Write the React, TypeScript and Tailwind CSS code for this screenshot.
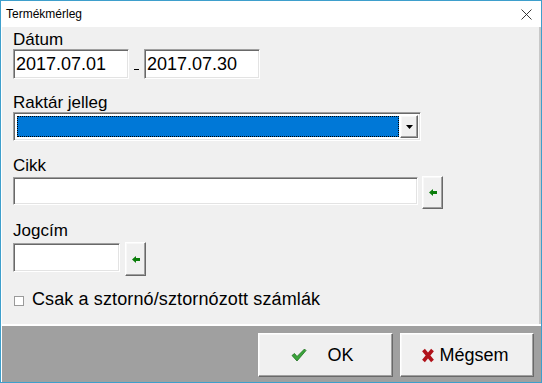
const sunken =
  "bg-white border border-t-[#a0a0a0] border-l-[#a0a0a0] border-b-white border-r-white shadow-[inset_1px_1px_0_#696969,inset_-1px_-1px_0_#e3e3e3]";
const raised =
  "bg-[#f0f0f0] border border-t-white border-l-white border-b-[#696969] border-r-[#696969] shadow-[inset_-1px_-1px_0_#a0a0a0,inset_1px_1px_0_#f8f8f8]";

function GreenArrow() {
  return (
    <svg width="8" height="7" viewBox="0 0 8 7">
      <polygon points="0,3.5 4,0 4,2 8,2 8,5 4,5 4,7" fill="#0a7d0a" />
    </svg>
  );
}

function PickButton() {
  return (
    <button type="button" className={`${raised} w-[21px] flex items-center justify-center`}>
      <GreenArrow />
    </button>
  );
}

function Label({ children, className = "" }: { children: string; className?: string }) {
  return <div className={`text-[17px] leading-[19px] text-black ${className}`}>{children}</div>;
}

export default function App() {
  return (
    <div className="w-[542px] h-[383px] border border-[#3e9fcc] flex flex-col bg-white font-['Liberation_Sans',Arial,sans-serif] text-black overflow-hidden">
      {/* title bar */}
      <div className="h-[26px] flex items-center pl-[5px] pr-[9px] shrink-0">
        <span className="text-[12px]">Termékmérleg</span>
        <svg className="ml-auto" width="11" height="11" viewBox="0 0 11 11">
          <path d="M0.5 0.5 L10.5 10.5 M10.5 0.5 L0.5 10.5" stroke="#222" strokeWidth="0.9" />
        </svg>
      </div>

      {/* body */}
      <div className="h-[297px] bg-[#f0f0f0] pl-[11px] pt-[3px] border-l border-l-white border-r-2 border-r-[#c8c8c8] shrink-0">
        <Label>Dátum</Label>
        <div className="flex items-center">
          <div className={`${sunken} w-[116px] h-[30px] flex items-center pl-[2px] pt-[1px] text-[18px]`}>
            2017.07.01
          </div>
          <div className="w-[15px] flex justify-center pt-[10px]">
            <div className="w-[5px] h-[1px] bg-black" />
          </div>
          <div className={`${sunken} w-[116px] h-[30px] flex items-center pl-[2px] pt-[1px] text-[18px]`}>
            2017.07.30
          </div>
        </div>

        <Label className="mt-[14px]">Raktár jelleg</Label>
        <div className={`${sunken} w-[408px] h-[29px] flex p-[2px]`}>
          <div className="flex-1 bg-white p-[1px]">
            <div className="h-full bg-[#0078d7] border border-dotted border-black" />
          </div>
          <div className={`${raised} w-[18px] flex items-center justify-center`}>
            <svg width="7" height="4" viewBox="0 0 7 4">
              <polygon points="0,0 7,0 3.5,4" fill="#000" />
            </svg>
          </div>
        </div>

        <Label className="mt-[15px]">Cikk</Label>
        <div className="flex items-start gap-[4px] mt-[1px]">
          <div className={`${sunken} w-[405px] h-[28px] mt-[1px]`} />
          <div className="h-[33px] flex">
            <PickButton />
          </div>
        </div>

        <Label className="mt-[12px]">Jogcím</Label>
        <div className="flex items-start gap-[5px] mt-[2px]">
          <div className={`${sunken} w-[107px] h-[29px] mt-[1px]`} />
          <div className="h-[34px] flex">
            <PickButton />
          </div>
        </div>

        <div className="flex items-center mt-[13px] h-[21px]">
          <div className="w-[10px] h-[10px] bg-white border border-[#9a9a9a] mt-[3px] ml-[1px]" />
          <span className="ml-[8px] text-[18px] leading-[21px] tracking-[0.12px]">
            Csak a sztornó/sztornózott számlák
          </span>
        </div>
      </div>

      {/* bottom panel */}
      <div className="flex-1 bg-[#a0a0a0] border-t-2 border-t-white border-l border-l-white flex justify-end gap-[7px] pt-[7px] pr-[7px]">
        <button type="button" className={`${raised} w-[135px] h-[44px] flex items-center justify-center gap-[20px] pr-[6px] text-[18px]`}>
          <svg width="16" height="14" viewBox="0 0 16 14">
            <path
              d="M1 7.5 L3.5 5.5 L6 8.5 L13.5 1 L15 2.5 L6 13 Z"
              fill="#3aa53a"
              stroke="#1f6e1f"
              strokeWidth="0.8"
              strokeLinejoin="round"
            />
          </svg>
          <span>OK</span>
        </button>
        <button type="button" className={`${raised} w-[134px] h-[44px] flex items-center justify-center gap-[4px] pr-[4px] text-[18px]`}>
          <svg width="14" height="15" viewBox="0 0 14 15">
            <path d="M2.5 2 L11.5 13 M11.5 2 L2.5 13" stroke="#b0121a" strokeWidth="3.6" />
          </svg>
          <span>Mégsem</span>
        </button>
      </div>
    </div>
  );
}
